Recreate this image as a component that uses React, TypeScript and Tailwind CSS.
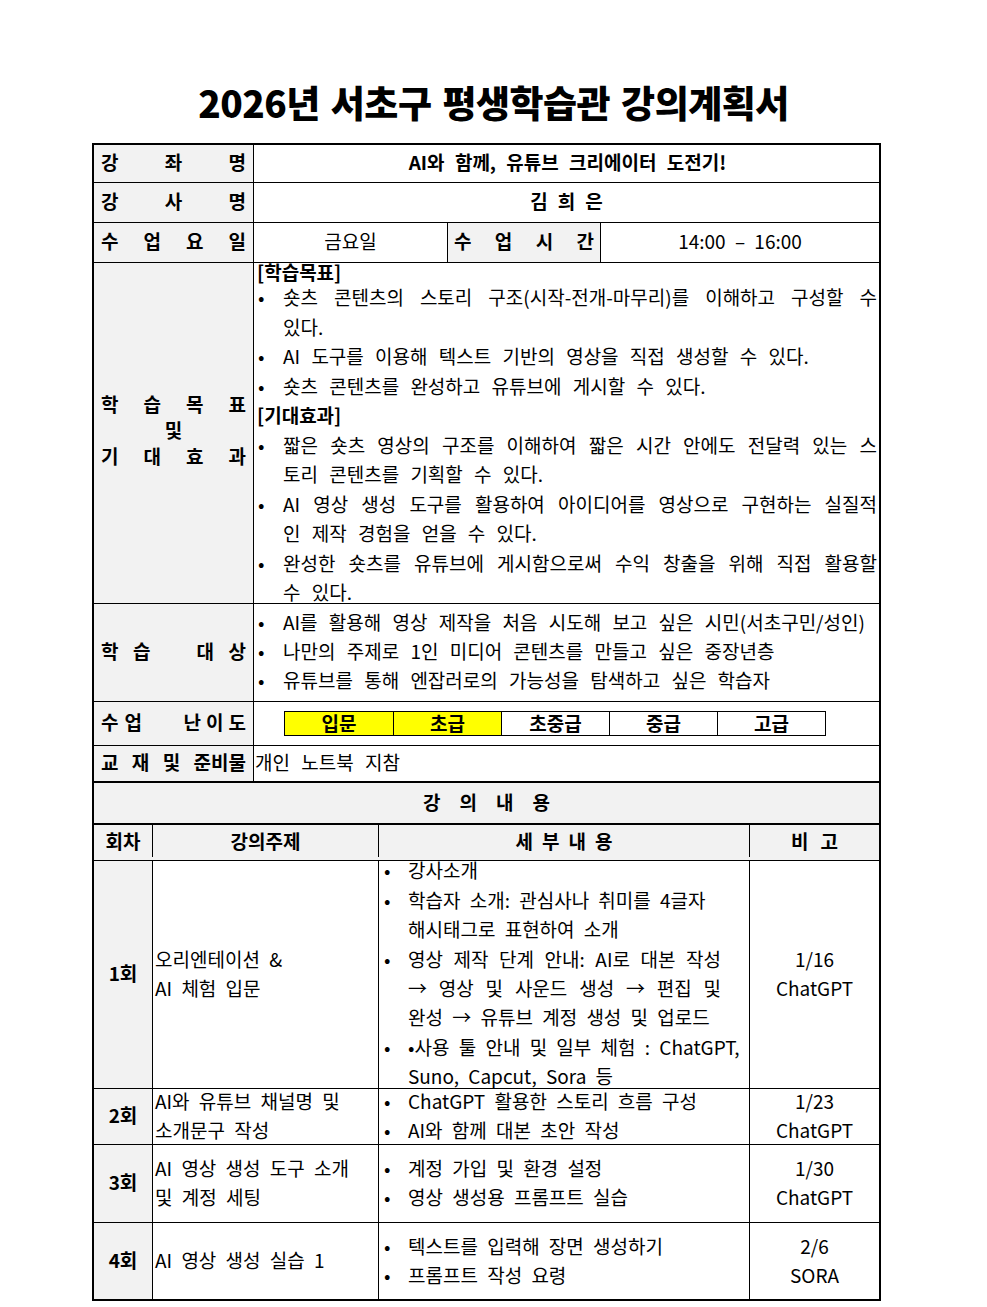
import React from "react";

type Item = { lines: string[]; justify?: boolean };

function Spread({ chars }: { chars: string[] }) {
  return (
    <div className="flex w-full justify-between">
      {chars.map((c, i) =>
        c === "" ? <span key={i} className="w-[17px]" /> : <span key={i}>{c}</span>
      )}
    </div>
  );
}

function Label({ chars, className = "" }: { chars: string[]; className?: string }) {
  return (
    <div
      className={`flex w-[160px] shrink-0 items-center border-r border-black bg-[#f2f2f2] pb-[3px] pl-[7px] pr-[7px] font-bold ${className}`}
    >
      <Spread chars={chars} />
    </div>
  );
}

function Bullets({
  items,
  leading,
  textLeft,
}: {
  items: Item[];
  leading: string;
  textLeft: string;
}) {
  return (
    <div className={leading}>
      {items.map((it, i) => (
        <div key={i} className="flex">
          <span className={`shrink-0 pl-[1px] [word-spacing:0] ${textLeft}`}>•</span>
          <div className="flex-1">
            {it.lines.map((l, j) => (
              <div
                key={j}
                className={
                  it.justify && j < it.lines.length - 1
                    ? "whitespace-nowrap [text-align-last:justify]"
                    : "whitespace-nowrap"
                }
              >
                {l}
              </div>
            ))}
          </div>
        </div>
      ))}
    </div>
  );
}

const goals: Item[] = [
  { lines: ["숏츠 콘텐츠의 스토리 구조(시작-전개-마무리)를 이해하고 구성할 수", "있다."], justify: true },
  { lines: ["AI 도구를 이용해 텍스트 기반의 영상을 직접 생성할 수 있다."] },
  { lines: ["숏츠 콘텐츠를 완성하고 유튜브에 게시할 수 있다."] },
];

const effects: Item[] = [
  { lines: ["짧은 숏츠 영상의 구조를 이해하여 짧은 시간 안에도 전달력 있는 스", "토리 콘텐츠를 기획할 수 있다."], justify: true },
  { lines: ["AI 영상 생성 도구를 활용하여 아이디어를 영상으로 구현하는 실질적", "인 제작 경험을 얻을 수 있다."], justify: true },
  { lines: ["완성한 숏츠를 유튜브에 게시함으로써 수익 창출을 위해 직접 활용할", "수 있다."], justify: true },
];

const targets: Item[] = [
  { lines: ["AI를 활용해 영상 제작을 처음 시도해 보고 싶은 시민(서초구민/성인)"] },
  { lines: ["나만의 주제로 1인 미디어 콘텐츠를 만들고 싶은 중장년층"] },
  { lines: ["유튜브를 통해 엔잡러로의 가능성을 탐색하고 싶은 학습자"] },
];

const levels = [
  { name: "입문", on: true },
  { name: "초급", on: true },
  { name: "초중급", on: false },
  { name: "중급", on: false },
  { name: "고급", on: false },
];

type Lesson = {
  no: string;
  topic: string[];
  items: Item[];
  date: string;
  tool: string;
  h: string;
};

const lessons: Lesson[] = [
  {
    no: "1회",
    topic: ["오리엔테이션 &", "AI 체험 입문"],
    items: [
      { lines: ["강사소개"] },
      { lines: ["학습자 소개: 관심사나 취미를 4글자", "해시태그로 표현하여 소개"] },
      {
        lines: ["영상 제작 단계 안내: AI로 대본 작성", "→  영상 및 사운드 생성 →  편집 및", "완성 → 유튜브 계정 생성 및 업로드"],
        justify: true,
      },
      { lines: ["•사용 툴 안내 및 일부 체험 : ChatGPT,", "Suno, Capcut, Sora 등"] },
    ],
    date: "1/16",
    tool: "ChatGPT",
    h: "h-[228px]",
  },
  {
    no: "2회",
    topic: ["AI와 유튜브 채널명 및", "소개문구 작성"],
    items: [{ lines: ["ChatGPT 활용한 스토리 흐름 구성"] }, { lines: ["AI와 함께 대본 초안 작성"] }],
    date: "1/23",
    tool: "ChatGPT",
    h: "h-[56px]",
  },
  {
    no: "3회",
    topic: ["AI 영상 생성 도구 소개", "및 계정 세팅"],
    items: [{ lines: ["계정 가입 및 환경 설정"] }, { lines: ["영상 생성용 프롬프트 실습"] }],
    date: "1/30",
    tool: "ChatGPT",
    h: "h-[78px]",
  },
  {
    no: "4회",
    topic: ["AI 영상 생성 실습 1"],
    items: [{ lines: ["텍스트를 입력해 장면 생성하기"] }, { lines: ["프롬프트 작성 요령"] }],
    date: "2/6",
    tool: "SORA",
    h: "h-[76px]",
  },
];

export default function App() {
  return (
    <div className="min-h-screen bg-white pb-[8px] font-['Noto_Sans_CJK_KR',sans-serif] text-[19px] text-black [word-spacing:7px]">
      <h1 className="pt-[80px] text-center text-[37px] font-black leading-[44px] tracking-[-0.5px] [word-spacing:3px]">
        2026년 서초구 평생학습관 강의계획서
      </h1>

      <div className="ml-[92px] mt-[19px] w-[789px] border-2 border-black leading-[24px]">
        {/* 강좌명 */}
        <div className="flex h-[38px] border-b border-black">
          <Label chars={["강", "좌", "명"]} />
          <div className="flex flex-1 items-center justify-center pb-[3px] pl-[2px] font-bold [word-spacing:6px]">
            AI와 함께, 유튜브 크리에이터 도전기!
          </div>
        </div>

        {/* 강사명 */}
        <div className="flex h-[40px] border-b border-black">
          <Label chars={["강", "사", "명"]} />
          <div className="flex flex-1 items-center justify-center gap-[10px] pb-[3px] font-bold">
            <span>김</span>
            <span>희</span>
            <span>은</span>
          </div>
        </div>

        {/* 수업요일 / 수업시간 */}
        <div className="flex h-[40px] border-b border-black">
          <Label chars={["수", "업", "요", "일"]} />
          <div className="flex w-[194px] shrink-0 items-center justify-center border-r border-black pb-[3px]">
            금요일
          </div>
          <div className="flex w-[153px] shrink-0 items-center border-r border-black bg-[#f2f2f2] pb-[3px] pl-[6px] pr-[6px] font-bold">
            <Spread chars={["수", "업", "시", "간"]} />
          </div>
          <div className="flex flex-1 items-center justify-center pb-[3px] [word-spacing:5px]">14:00 – 16:00</div>
        </div>

        {/* 학습목표 및 기대효과 */}
        <div className="flex h-[341px] border-b border-black">
          <div className="flex w-[160px] shrink-0 flex-col justify-center border-r border-black bg-[#f2f2f2] pb-[6px] pl-[7px] pr-[7px] font-bold leading-[26px]">
            <Spread chars={["학", "습", "목", "표"]} />
            <div className="text-center">및</div>
            <Spread chars={["기", "대", "효", "과"]} />
          </div>
          <div className="flex-1 pl-[3px] pr-[2px]">
            <div className="mt-[-1px] font-bold leading-[20px]">[학습목표]</div>
            <Bullets items={goals} leading="leading-[29.5px]" textLeft="w-[26px]" />
            <div className="font-bold leading-[29.5px]">[기대효과]</div>
            <Bullets items={effects} leading="leading-[29.5px]" textLeft="w-[26px]" />
          </div>
        </div>

        {/* 학습대상 */}
        <div className="flex h-[98px] border-b border-black">
          <Label chars={["학", "습", "", "대", "상"]} />
          <div className="flex flex-1 items-center pb-[4px] pl-[3px] pr-[2px]">
            <Bullets items={targets} leading="leading-[29px]" textLeft="w-[26px]" />
          </div>
        </div>

        {/* 수업 난이도 */}
        <div className="flex h-[44px] border-b border-black">
          <div className="flex w-[160px] shrink-0 items-center justify-between border-r border-black bg-[#f2f2f2] pb-[3px] pl-[7px] pr-[7px] font-bold">
            <div className="flex gap-[6px]">
              <span>수</span>
              <span>업</span>
            </div>
            <div className="flex gap-[5px]">
              <span>난</span>
              <span>이</span>
              <span>도</span>
            </div>
          </div>
          <div className="flex flex-1 items-center pl-[30px]">
            <div className="flex h-[25px] border border-black font-bold leading-[20px]">
              {levels.map((l, i) => (
                <div
                  key={l.name}
                  className={`flex w-[108px] items-center justify-center pb-[2px] ${i > 0 ? "border-l border-black" : ""} ${
                    l.on ? "bg-[#ffff00]" : "bg-white"
                  }`}
                >
                  {l.name}
                </div>
              ))}
            </div>
          </div>
        </div>

        {/* 교재 및 준비물 */}
        <div className="flex h-[37px] border-b-2 border-black">
          <Label chars={["교", "재", "및", "준비물"]} />
          <div className="flex flex-1 items-center pb-[3px] pl-[1px]">개인 노트북 지참</div>
        </div>

        {/* 강의내용 */}
        <div className="flex h-[42px] items-center justify-center gap-[19px] border-b-2 border-black bg-[#f2f2f2] pb-[3px] font-bold">
          <span>강</span>
          <span>의</span>
          <span>내</span>
          <span>용</span>
        </div>

        {/* header */}
        <div className="flex h-[36px] border-b border-black bg-[#f2f2f2] pb-[3px] font-bold">
          <div className="flex w-[59px] shrink-0 items-center justify-center border-r border-black">회차</div>
          <div className="flex w-[226px] shrink-0 items-center justify-center border-r border-black">강의주제</div>
          <div className="flex w-[371px] shrink-0 items-center justify-center gap-[9px] border-r border-black">
            <span>세</span>
            <span>부</span>
            <span>내</span>
            <span>용</span>
          </div>
          <div className="flex flex-1 items-center justify-center gap-[12px]">
            <span>비</span>
            <span>고</span>
          </div>
        </div>

        <div className="[word-spacing:5px]">
          {lessons.map((ls, i) => (
            <div
              key={ls.no}
              className={`flex ${ls.h} ${i < lessons.length - 1 ? "border-b border-black" : ""}`}
            >
              <div className="flex w-[59px] shrink-0 items-center justify-center border-r border-black bg-[#f2f2f2] pb-[3px] font-bold">
                {ls.no}
              </div>
              <div className="flex w-[226px] shrink-0 flex-col justify-center border-r border-black pb-[3px] pl-[2px] leading-[29px]">
                {ls.topic.map((t) => (
                  <div key={t} className="whitespace-nowrap">
                    {t}
                  </div>
                ))}
              </div>
              <div className="flex w-[371px] shrink-0 items-center border-r border-black pb-[3px] pl-[4px]">
                <div className={ls.no === "1회" ? "w-[338px]" : ""}>
                  <Bullets
                    items={ls.items}
                    leading={ls.no === "1회" ? "leading-[29.4px]" : "leading-[29px]"}
                    textLeft="w-[25px]"
                  />
                </div>
              </div>
              <div className="flex flex-1 flex-col items-center justify-center pb-[3px] leading-[29px]">
                <div>{ls.date}</div>
                <div>{ls.tool}</div>
              </div>
            </div>
          ))}
        </div>
      </div>
    </div>
  );
}
